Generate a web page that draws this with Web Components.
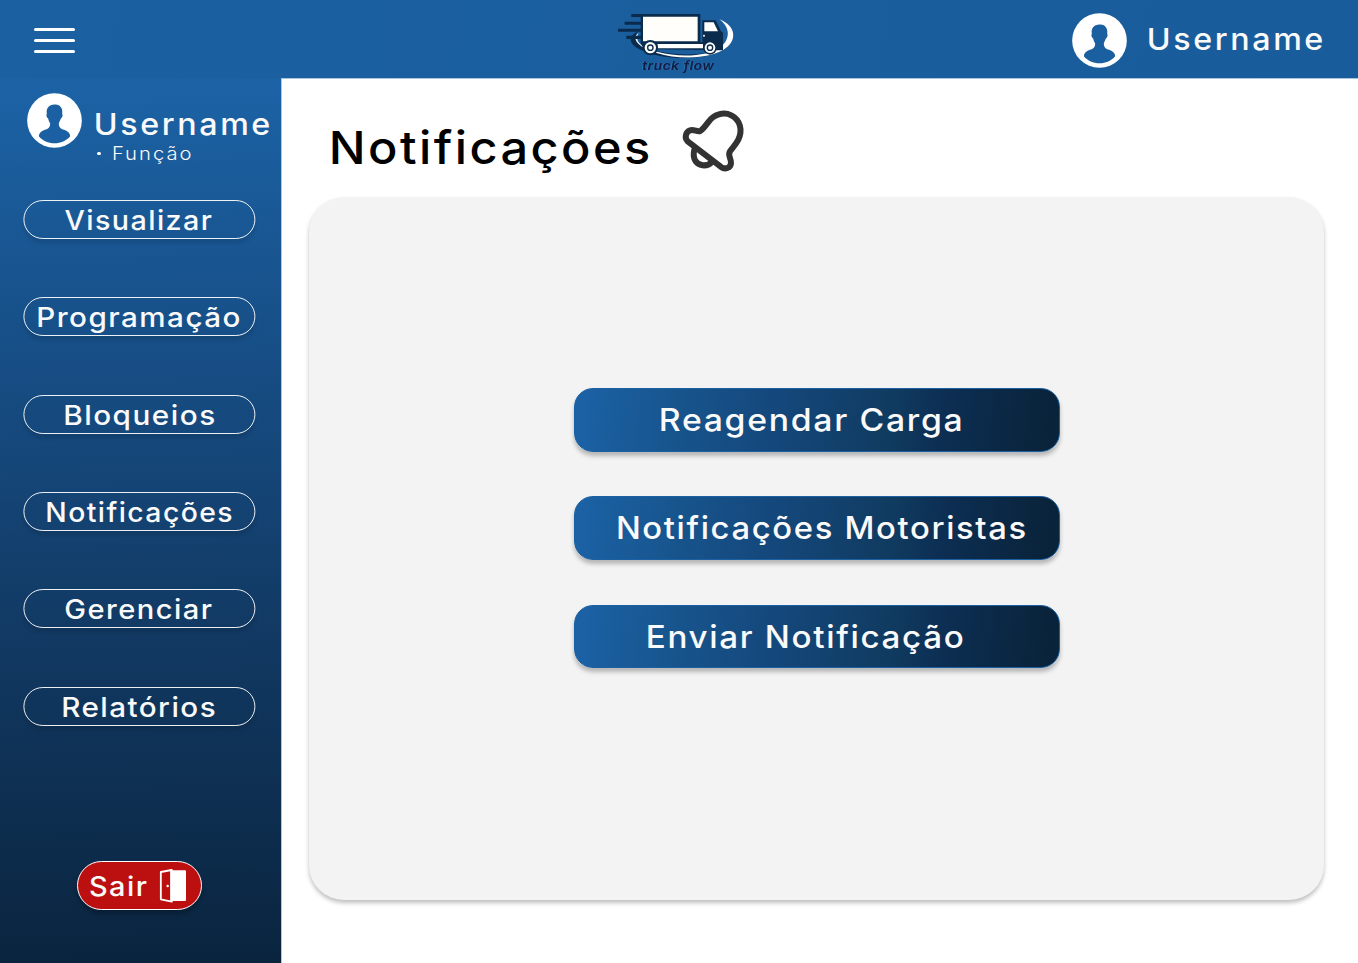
<!DOCTYPE html>
<html lang="pt-BR">
<head>
<meta charset="utf-8">
<title>Truck Flow - Notificações</title>
<style>
html,body{margin:0;height:963px;overflow:hidden;background:#fff;font-family:Inter,"Open Sans",sans-serif}
</style>
</head>
<body>
<app-page></app-page>
<script>
const define = (name, html, setup) => customElements.define(name, class extends HTMLElement {
  connectedCallback() {
    if (this.shadowRoot) return;
    const t = document.createElement('template');
    t.innerHTML = html;
    this.attachShadow({mode: 'open'}).append(t.content.cloneNode(true));
    if (setup) setup(this, this.shadowRoot);
  }
});

/* A line of text whose visible width is exactly `w`; its box is as tall as its capitals. */
const ruler = document.createElement('canvas').getContext('2d');
define('fit-label', `<style>
:host{display:block;flex:none}
svg{display:block;overflow:visible}
</style><svg><text></text></svg>`, (el, root) => {
  const num = (k, d) => +(el.getAttribute(k) ?? d);
  const w = num('w'), cap = num('cap'), weight = num('weight', 500);
  const size = cap / 0.727, gap = size * num('gap', 0.05);
  const style = el.getAttribute('slant') || 'normal';
  const text = el.getAttribute('text');
  ruler.font = `${style} ${weight} ${size}px Inter, sans-serif`;
  ruler.letterSpacing = gap + 'px';
  const m = ruler.measureText(text);
  const k = w / (m.actualBoundingBoxLeft + m.actualBoundingBoxRight);
  const svg = root.querySelector('svg'), t = root.querySelector('text');
  svg.setAttribute('width', w);
  svg.setAttribute('height', cap);
  t.textContent = text;
  t.setAttribute('transform', `translate(${m.actualBoundingBoxLeft * k} ${cap}) scale(${k} 1)`);
  t.style.cssText = `font:${style} ${weight} ${size}px Inter,sans-serif;letter-spacing:${gap}px;fill:currentColor`;
});

define('user-avatar', `<style>:host{display:block;flex:none;width:55px;height:55px}svg{display:block}</style>
<svg width="55" height="55" viewBox="66.5 38.5 165 165"><circle cx="149" cy="121" r="82" fill="#fff"/>
<path fill="var(--bg,#1a5f9f)" d="M149 73C166 71 175 86 172 100C175 106 172 113 168 115C166 122 163 126 162 130C162 142 168 146 178 149C190 153 196 160 196 168C184 182 168 189 149 189C130 189 114 182 102 168C102 160 108 153 120 149C130 146 136 142 136 130C134 126 131 122 130 115C126 113 123 106 126 100C123 86 132 73 149 73Z"/></svg>`);

define('menu-toggle', `<style>:host{display:flex;flex-direction:column;justify-content:space-between;width:41px;height:25px}
i{display:block;height:3px;border-radius:2px;background:#fff}</style><i></i><i></i><i></i>`);

define('brand-logo', `<style>:host{display:grid;width:150px;height:78px}
svg,.name{grid-area:1/1}svg{display:block;overflow:visible}
.name{padding:60.5px 0 0 42px;color:#101d42;filter:drop-shadow(-.7px .3px 0 #1487b5) drop-shadow(.7px 0 0 #5a2096)}</style>
<svg width="150" height="85" viewBox="0 0 450 255">
<path d="M116 94C76 110 88 142 143 158C205 180 330 181 374 148C410 122 405 83 362 60C395 84 400 118 368 141C330 170 210 169 153 148C110 132 94 116 116 94Z" fill="#0a2b4c"/>
<path d="M116 98C91 116 117 143 170 159C240 181 340 177 381 142C410 118 408 78 358 58C392 83 390 117 364 140C324 170 238 173 174 156C128 143 100 126 116 98Z" fill="#fff"/>
<path d="M94 42H132V51H94ZM74 65H128V74H74ZM54 86.500H128V95H54ZM79 107.500H128V117H79Z" fill="#0a2b4c"/>
<path d="M122 42H301V126H307V61H347L363 94L369 98V151H350L166 148L130 145L122 128Z" fill="#0a2b4c"/>
<path d="M129 50H293V124H129Z" fill="#fffefb"/>
<path d="M172 132H309V145H172ZM313 67H341L354 94H313Z" fill="#fff"/>
<circle cx="312" cy="107" r="3" fill="#fff"/>
<circle cx="151" cy="143" r="23" fill="#0a2b4c"/><circle cx="151" cy="143" r="17" fill="#fff"/><circle cx="151" cy="143" r="10" fill="#0a2b4c"/><circle cx="151" cy="143" r="6" fill="#fff"/>
<circle cx="330" cy="143" r="21" fill="#0a2b4c"/><circle cx="330" cy="143" r="16" fill="#fff"/><circle cx="330" cy="143" r="10" fill="#0a2b4c"/><circle cx="330" cy="143" r="6" fill="#fff"/>
</svg><div class="name"><fit-label text="truck flow" w="72.5" cap="9" weight="600" slant="italic" gap=".04"></fit-label></div>`);

define('app-header', `<style>
:host{display:grid;grid-template-columns:600px 150px 1fr;box-sizing:border-box;height:79px;background:linear-gradient(100deg,#1b60a1,#195c9b);border-bottom:1px solid #a9c4dd}
menu-toggle{margin:28px 0 0 34px}
.user{display:flex;padding:13px 0 0 322px;gap:22px;color:#fafafa}
fit-label{padding-top:15px}
</style><menu-toggle></menu-toggle><brand-logo></brand-logo>
<div class="user"><user-avatar></user-avatar><fit-label text="Username" w="173.500" cap="22" weight="500" gap=".08"></fit-label></div>`);

define('exit-button', `<style>
:host{display:flex;box-sizing:border-box;width:125px;height:49px;border:1px solid #fff;border-radius:25px;background:#bb0f10;color:#fafafa;box-shadow:0 4px 4px rgba(0,0,0,.25);padding-left:12px}
fit-label{margin-top:14px}svg{display:block;margin:6px 0 0 12.500px}
</style><fit-label text="Sair" w="56.500" cap="19.5"></fit-label>
<svg width="28" height="36" viewBox="298 84 84 108"><path d="M334 91H376Q379 91 379 94V180Q379 183 376 183H334Z" fill="#fff"/><path d="M303.500 96L336 90V185L303.500 178Z" fill="#bb0f10" stroke="#fff" stroke-width="5.500" stroke-linejoin="round"/><path d="M335 89V186" stroke="#fff" stroke-width="7"/><circle cx="324" cy="138" r="3.700" fill="#fff"/></svg>`);

const items = [['Visualizar',65,147],['Programação',39,201.500],['Bloqueios',65.5,149],['Notificações',47.500,184.500],['Gerenciar',66,146],['Relatórios',64,151.500]];
customElements.define('nav-item', class extends HTMLElement {
  connectedCallback() {
    if (this.shadowRoot) return;
    const [text, x, w] = items[+this.getAttribute('index')];
    this.attachShadow({mode: 'open'}).innerHTML = `<style>
:host{display:flex;box-sizing:border-box;width:232px;height:39px;border:1px solid rgba(255,255,255,.92);border-radius:20px;box-shadow:0 4px 4px rgba(0,0,0,.12);color:#fafafa;padding:9px 0 0 ${x - 24.6}px}
</style><fit-label text="${text}" w="${w}" cap="19.800"></fit-label>`;
  }
});

define('side-bar', `<style>
:host{display:block;box-sizing:border-box;width:281px;height:885px;background:linear-gradient(179deg,#1c63a6 0%,#174f87 30%,#123b66 60%,#0a243e 100%);box-shadow:1px 0 0 #b4c3d2;color:#fafafa}
.user{display:flex;height:107px;padding:15px 0 0 27px;box-sizing:border-box;--bg:#1b60a2}
.who{padding:20px 0 0 14px}
.role{display:flex;align-items:center;gap:12.500px;margin-top:12px}
.role i{width:3.500px;height:3.500px;border-radius:50%;background:#fff;margin-left:1px}
nav{display:grid;gap:58.350px;padding:15px 0 0 23px}
nav nav-item{transform:translateX(.4px)}
exit-button{margin:135px 0 0 77px}
</style>
<div class="user"><user-avatar></user-avatar><div class="who"><fit-label text="Username" w="173.500" cap="22" weight="550" gap=".08"></fit-label>
<div class="role"><i></i><fit-label text="Função" w="77.500" cap="13.300" weight="350" gap=".1"></fit-label></div></div></div>
<nav>${items.map((_, i) => `<nav-item index="${i}"></nav-item>`).join('')}</nav>
<exit-button></exit-button>`);

define('bell-icon', `<style>:host{display:block;flex:none}svg{display:block}</style>
<svg width="66.667" height="65" viewBox="1110 40 200 195" fill="none" stroke="#333" stroke-width="18" stroke-linejoin="round" stroke-linecap="round">
<path d="M1196 78C1211 57 1240 47 1264 59C1290 72 1299 103 1285 132C1278 146 1267 157 1260 167C1252 180 1264 188 1263 202C1262 218 1245 222 1233 214L1133 137C1122 126 1128 108 1140 104C1152 100 1162 110 1171 106C1178 102 1187 90 1196 78Z"/>
<path d="M1153 162C1147 186 1156 206 1178 209C1191 210 1200 206 1207 197"/></svg>`);

customElements.define('action-button', class extends HTMLElement {
  connectedCallback() {
    if (this.shadowRoot) return;
    const a = k => this.getAttribute(k);
    this.attachShadow({mode: 'open'}).innerHTML = `<style>
:host{display:flex;box-sizing:border-box;width:486px;height:63.500px;border:1px solid #1a60a3;border-radius:19px;color:#fafafa;box-shadow:0 4px 4px rgba(0,0,0,.25);background:linear-gradient(97deg,#1b61a4 2%,#17548c 22%,#14477b 42%,#103b60 65%,#0d2f54 75%,#09233a 97%);padding:19.200px 0 0 ${a('inset')}px}
</style><fit-label text="${a('text')}" w="${a('w')}" cap="22.600"></fit-label>`;
  }
});

define('app-page', `<style>
:host{display:block;width:1358px;height:963px}
.body{display:flex;margin-top:-1px}
side-bar{flex:none}
main{padding:0 0 0 28px}
.title{display:flex;gap:31.500px;padding:30.700px 0 0 22.500px;height:119px;box-sizing:border-box;color:#000}
.title fit-label{padding-top:22.800px}
.panel{box-sizing:border-box;width:1015px;height:703px;border-radius:35px;background:#f3f3f3;box-shadow:0 3px 4px rgba(0,0,0,.25);display:grid;align-content:start;justify-items:start;gap:44.800px;padding:191px 0 0 265px}
</style>
<app-header></app-header>
<div class="body"><side-bar></side-bar><main>
<div class="title"><fit-label text="Notificações" w="316.500" cap="33.300" weight="550"></fit-label><bell-icon></bell-icon></div>
<section class="panel">
<action-button text="Reagendar Carga" inset="85.500" w="300"></action-button>
<action-button text="Notificações Motoristas" inset="43" w="407.500"></action-button>
<action-button text="Enviar Notificação" inset="72.500" w="315"></action-button>
</section></main></div>`);
</script>
</body>
</html>
